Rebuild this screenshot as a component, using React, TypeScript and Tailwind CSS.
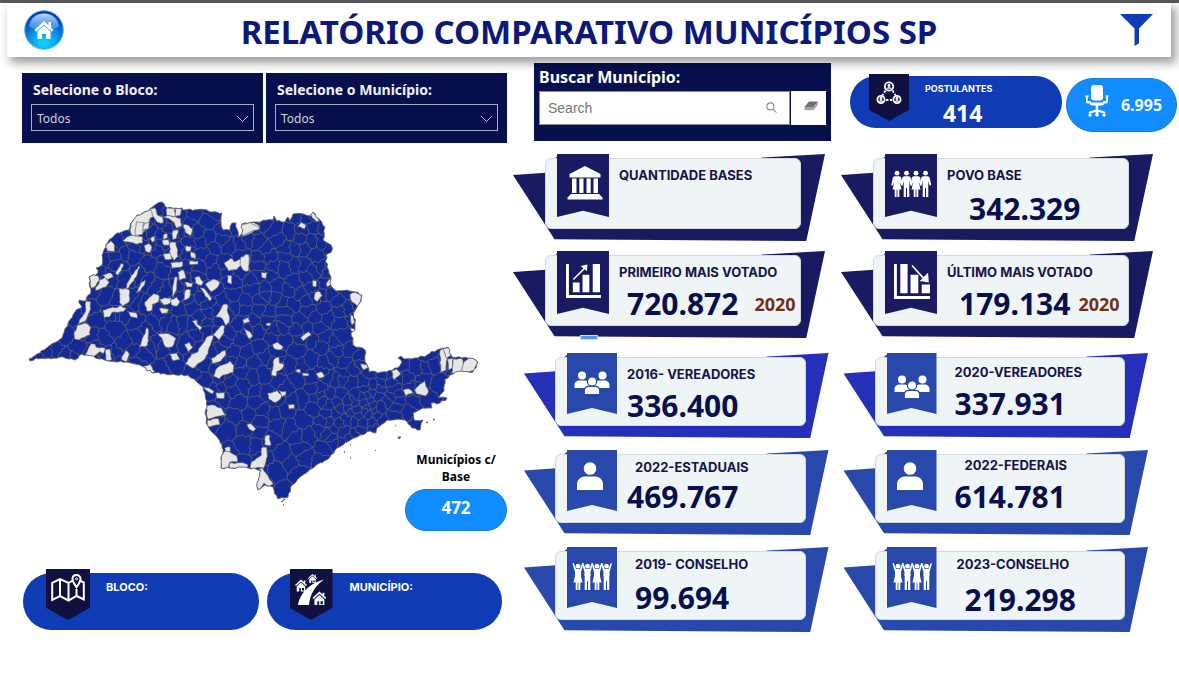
import React from "react";

type Pt = [number, number];

/* ---------- map geometry ---------- */

function random(seed: number) {
  let s = seed;
  return () => {
    s = (s * 1664525 + 1013904223) % 4294967296;
    return s / 4294967296;
  };
}

const parse = (text: string): Pt[] =>
  text.split(" ").map((p) => p.split(",").map(Number) as Pt);

const OUTLINE = parse(
  "29,359 40,353 49,346 62,338 68,323 75,312 82,307 79,300 86,301 91,290 89,277 98,273 96,268 102,265 103,253 108,242 117,233 129,230 132,222 137,215 148,211 155,205 162,202 167,208 182,208 183,210 207,210 210,212 222,213 221,223 223,230 230,230 232,223 236,223 238,237 242,233 242,224 253,222 257,222 273,220 274,216 277,221 285,222 288,217 290,221 293,214 303,214 310,216 313,212 319,219 325,227 323,240 331,245 332,250 326,255 327,267 331,278 331,286 336,291 347,290 355,292 362,295 361,301 358,305 354,312 355,323 355,330 351,333 353,345 365,350 365,362 368,367 369,372 387,372 397,368 402,362 398,358 401,356 404,359 415,358 427,355 437,350 448,347 452,357 462,358 470,358 478,362 473,372 461,371 453,374 445,379 444,391 438,398 447,398 440,403 431,403 432,408 423,408 413,413 414,420 423,420 420,430 412,428 405,420 387,420 377,428 376,433 370,431 357,437 337,448 330,457 313,468 300,477 292,485 288,497 278,499 273,487 265,485 258,490 257,483 261,470 245,467 230,468 221,468 221,458 223,453 222,445 217,437 210,430 206,423 205,413 207,407 203,387 196,381 188,375 152,373 140,365 127,362 108,361 99,359 87,355 82,354 75,360 60,357 48,358 36,358 30,361"
);

function roughen(points: Pt[], step: number, amount: number, seed: number) {
  const rnd = random(seed);
  const out: Pt[] = [];
  points.forEach(([x, y], i) => {
    const [nx, ny] = points[(i + 1) % points.length];
    const n = Math.max(1, Math.round(Math.hypot(nx - x, ny - y) / step));
    for (let k = 0; k < n; k++) {
      const a = k === 0 ? 0 : amount;
      out.push([
        x + ((nx - x) * k) / n + (rnd() - 0.5) * a,
        y + ((ny - y) * k) / n + (rnd() - 0.5) * a,
      ]);
    }
  });
  return "M" + out.map(([x, y]) => `${x.toFixed(1)} ${y.toFixed(1)}`).join("L") + "Z";
}

function inside([px, py]: Pt, poly: Pt[]) {
  let hit = false;
  for (let i = 0, j = poly.length - 1; i < poly.length; j = i++) {
    const [xi, yi] = poly[i];
    const [xj, yj] = poly[j];
    if (yi > py !== yj > py && px < ((xj - xi) * (py - yi)) / (yj - yi) + xi) hit = !hit;
  }
  return hit;
}

function spacing(x: number, y: number) {
  const metro = Math.hypot(x - 358, y - 408);
  if (metro < 16) return 4;
  if (metro < 45) return 7;
  if (x < 330 && y > 405) return 14;
  if (x > 380) return 9;
  if (x < 180) return 7;
  return 9.5;
}

function buildCells() {
  const rnd = random(77);
  const sites: Pt[] = [];
  for (let i = 0; i < 4500; i++) {
    const p: Pt = [29 + rnd() * 450, 202 + rnd() * 298];
    const spread = 0.65 + rnd() * 0.7;
    if (!inside(p, OUTLINE)) continue;
    const r = spacing(p[0], p[1]) * spread;
    const tall = p[0] < 180 && p[1] > 250 ? 0.36 : 1;
    if (sites.every(([x, y]) => Math.hypot(x - p[0], (y - p[1]) * tall) > r)) sites.push(p);
  }
  let path = "";
  sites.forEach(([sx, sy]) => {
    let cell: Pt[] = [
      [sx - 26, sy - 26],
      [sx + 26, sy - 26],
      [sx + 26, sy + 26],
      [sx - 26, sy + 26],
    ];
    sites.forEach(([ox, oy]) => {
      const dx = ox - sx;
      const dy = oy - sy;
      if ((dx === 0 && dy === 0) || Math.hypot(dx, dy) > 52) return;
      const mx = (sx + ox) / 2;
      const my = (sy + oy) / 2;
      const side = ([x, y]: Pt) => (x - mx) * dx + (y - my) * dy;
      const next: Pt[] = [];
      cell.forEach((a, i) => {
        const b = cell[(i + 1) % cell.length];
        const da = side(a);
        const db = side(b);
        if (da <= 0) next.push(a);
        if (da <= 0 !== db <= 0) {
          const t = da / (da - db);
          next.push([a[0] + (b[0] - a[0]) * t, a[1] + (b[1] - a[1]) * t]);
        }
      });
      cell = next;
    });
    cell.forEach((p, i) => {
      const q = cell[(i + 1) % cell.length];
      if (p[0] + p[1] * 0.01 > q[0] + q[1] * 0.01) return;
      const len = Math.hypot(q[0] - p[0], q[1] - p[1]);
      const n = Math.max(1, Math.round(len / 2.5));
      path += `M${p[0].toFixed(1)} ${p[1].toFixed(1)}`;
      for (let k = 1; k < n; k++) {
        const h = (rnd() - 0.5) * 3;
        const x = p[0] + ((q[0] - p[0]) * k) / n - ((q[1] - p[1]) / len) * h;
        const y = p[1] + ((q[1] - p[1]) * k) / n + ((q[0] - p[0]) / len) * h;
        path += `L${x.toFixed(1)} ${y.toFixed(1)}`;
      }
      path += `L${q[0].toFixed(1)} ${q[1].toFixed(1)}`;
    });
  });
  return path;
}

const OUTLINE_PATH = roughen(OUTLINE, 3, 2, 5);
const CELLS_PATH = buildCells();

/* Municipalities without a base; each sheet has its own origin at triple scale. */
const WEST = [
  "330,105 333,85 350,62 385,46 408,45 412,62 392,68 385,95 370,112 350,128 334,118",
  "350,80 372,82 368,118 345,122",
  "374,84 388,82 386,102 368,106",
  "390,40 404,38 412,60 428,66 430,84 412,82 402,68",
  "440,38 465,38 465,65 440,62",
  "465,38 484,40 480,62 465,65",
  "430,66 450,62 482,70 486,92 470,100 462,82 448,72",
  "308,138 330,122 368,125 368,145 345,146",
  "490,88 508,92 518,102 512,123 496,112",
  "256,155 272,138 284,150 284,170 262,168",
  "372,152 388,146 396,158 388,174 376,168",
  "392,128 402,124 404,138 396,142",
  "458,108 475,105 470,130 458,134",
  "426,136 446,134 450,150 430,150",
  "430,120 440,114 442,128 430,134",
  "450,142 468,142 474,184 462,196 450,180",
  "430,178 450,174 456,192 436,194",
  "452,204 486,198 488,214 456,220",
  "498,152 514,156 512,168 498,168",
  "512,170 526,176 526,190 514,188",
  "508,198 534,198 534,208 508,208",
  "208,246 220,238 236,244 238,256 224,276 214,280",
  "238,256 256,246 268,262 258,276 240,282 226,286",
  "248,240 272,234 280,246 262,254",
  "286,236 302,206 310,206 306,220 294,240",
  "314,284 334,242 356,212 360,216 350,244 326,278",
  "348,294 364,262 376,254 374,270 362,286",
  "298,280 328,284 328,320 308,334 298,322",
  "248,346 266,340 288,338 300,330 320,340 310,350 276,352 268,366 252,368",
  "320,348 350,354 352,370 334,366",
  "374,322 400,296 418,302 416,320 398,328 396,346 380,348",
  "418,312 452,308 460,320 434,330",
  "450,314 470,306 480,320 470,334 454,330",
  "418,340 446,342 442,354 426,356",
  "458,292 464,246 472,246 470,284 458,308",
  "474,232 490,224 498,250 478,256",
  "494,262 518,264 516,276 500,276",
  "498,284 512,284 508,308 490,316",
  "524,248 538,244 550,262 544,272 526,264",
  "540,278 552,280 576,312 568,318",
  "556,268 580,252 600,262 592,278 574,290",
  "612,204 632,190 642,200 660,192 676,178 688,180 686,196 688,226 664,212 650,224 626,228",
  "624,240 636,244 634,268 622,262",
  "198,318 212,320 212,342 196,378 176,388 178,376 196,350",
  "162,420 172,390 196,384 212,398 210,420 178,434 164,432",
  "196,478 214,446 226,448 228,456 256,460 250,476 240,470 216,488",
  "256,464 270,462 276,494 260,500",
  "304,492 318,466 328,478 320,500",
  "358,456 380,398 386,402 382,452",
  "414,416 446,416 468,430 456,456 436,456 428,436",
  "448,478 470,474 480,494 460,498",
  "364,514 390,508 404,530 388,542 372,536",
  "494,448 508,442 518,458 504,470",
  "516,378 530,374 532,388 546,398 540,406",
  "496,506 514,478 534,470 548,446 560,426 580,420 572,450 556,490 520,520",
  "578,420 606,390 614,394 612,414 598,434",
  "588,366 608,330 622,328 628,380 618,392 606,370",
  "574,490 616,466 618,478 600,500 576,506",
  "580,544 592,518 630,498 642,512 640,532 610,540 598,552",
  "668,374 686,366 690,380 672,386",
  "672,400 690,410 698,424 688,432",
  "664,88 700,82 718,92 718,100 680,120 668,124",
];
const EAST = [
  "0,90 30,82 50,92 60,100 10,120 4,118",
  "172,94 184,82 198,90 194,102",
  "208,56 218,52 238,76 230,80",
  "2,186 24,178 28,190 26,228 10,226 0,208",
  "64,232 82,232 78,250 66,248",
  "218,256 230,258 228,276 218,274",
  "258,266 268,252 282,264 262,276",
  "226,292 240,290 246,302 232,320 222,312",
  "330,298 346,292 364,298 362,318 352,334 332,314",
  "330,358 340,364 344,382 336,390 332,374",
  "330,400 348,404 340,414",
  "182,428 206,410 214,420 190,438",
  "78,386 92,384 90,392 80,392",
  "98,448 112,442 130,456 124,464 104,462",
  "102,492 116,486 118,504 132,508 126,522 110,530 108,544 94,540",
  "168,524 180,522 182,532 170,532",
  "228,536 244,530 254,544 238,550",
  "188,534 206,536 206,542 188,542",
  "362,506 384,510 384,518 370,524",
  "454,528 470,522 482,536 462,554",
  "600,466 610,460 622,490 618,526 602,532",
  "610,460 628,458 634,480 620,490",
  "622,492 640,490 638,518 626,526",
  "640,492 668,492 672,534 636,536",
  "672,500 690,488 712,498 704,526 664,534",
];
const SOUTH = [
  "40,140 56,144 72,154 68,162 50,152",
  "78,158 104,158 102,176 80,174",
  "46,196 66,194 94,204 108,226 78,230 54,238",
  "52,240 86,236 90,254 52,260",
  "232,160 262,152 276,164 272,176 256,188 236,176",
  "268,152 288,154 288,164 276,170",
  "294,196 314,194 312,206 298,208",
  "170,254 184,252 198,266 190,274 178,268",
  "226,288 240,286 242,318 224,314",
  "214,324 230,322 232,350 222,384 180,384 184,366 214,346",
  "94,346 108,330 140,348 142,366 120,366 116,386 92,386",
  "104,324 120,320 122,334 108,336",
  "118,370 150,368 174,374 172,384 120,386",
  "208,386 218,384 250,432 236,440 222,430 206,450 198,438",
  "640,150 656,146 670,158 648,168",
  "674,150 704,122 716,154 706,168 680,162",
];

function Sheet({ x, y, shapes }: { x: number; y: number; shapes: string[] }) {
  return (
    <g transform={`translate(${x} ${y}) scale(0.3333)`}>
      {shapes.map((s, i) => (
        <path key={s} d={roughen(parse(s), 9, 4, i + 3)} />
      ))}
    </g>
  );
}

function StateMap() {
  return (
    <svg viewBox="22 143 485 426" className="block w-full" role="img" aria-label="Mapa dos municípios">
      <clipPath id="state">
        <path d={OUTLINE_PATH} />
      </clipPath>
      <path d={OUTLINE_PATH} fill="#142a96" />
      <g clipPath="url(#state)">
        <path d={CELLS_PATH} fill="none" stroke="#66676a" strokeWidth="0.8" />
        <g fill="#e6e6e6" stroke="#636467" strokeWidth="2">
          <Sheet x={20} y={195} shapes={WEST} />
          <Sheet x={240} y={195} shapes={EAST} />
          <Sheet x={190} y={340} shapes={SOUTH} />
        </g>
      </g>
      <path d={OUTLINE_PATH} fill="none" stroke="#636467" strokeWidth="0.9" />
      <g fill="#142a96" stroke="#636467" strokeWidth="1">
        <path d="M398 437l3 0-2 2zM395 425l1 1zM426 422l2 1zM433 419l2 1zM350 445l1 0zM344 452l1 0zM375 450l1 1zM350 458l1 0zM281 502l4-3zM283 505l1 0z" />
      </g>
    </svg>
  );
}

/* ---------- icons ---------- */

function HomeOrb() {
  return (
    <svg viewBox="0 0 40 40" className="size-10">
      <defs>
        <radialGradient id="orb" cx="0.5" cy="0.85" r="0.85">
          <stop offset="0" stopColor="#12d8ff" />
          <stop offset="0.4" stopColor="#0a9cf0" />
          <stop offset="0.75" stopColor="#0756c8" />
          <stop offset="1" stopColor="#0a2fa8" />
        </radialGradient>
        <linearGradient id="gloss" x1="0" y1="0" x2="0" y2="1">
          <stop offset="0" stopColor="#dff0ff" stopOpacity="0.85" />
          <stop offset="1" stopColor="#7fc4ff" stopOpacity="0.35" />
        </linearGradient>
      </defs>
      <circle cx="20" cy="20" r="19.3" fill="url(#orb)" stroke="#4bb4e0" strokeWidth="1" />
      <path d="M5 16C6 8 13 3.500 20 3.500S34 8 35 16c-4 3-8 4-15 4S9 19 5 16z" fill="url(#gloss)" />
      <path d="M20 11l-9.500 9 1.700 1.800L20 14.500l7.800 7.300 1.700-1.800-2.500-2.400V12h-2.600v3.200z" fill="#fff" />
      <path d="M13.500 21.500L20 15.500l6.500 6v7.500h-4.300v-5h-4.400v5h-4.300z" fill="#fff" />
    </svg>
  );
}

function Bank() {
  return (
    <svg viewBox="0 0 36 34" className="ml-1 w-9" fill="#fff">
      <path d="M18 0L2.500 8v3.500h31V8zM5 12.500h4.500V27H5zM12.300 12.500h4.200V27h-4.200zM19.500 12.500h4.200V27h-4.200zM26.500 12.500H31V27h-4.500zM4 28h28l3.500 3.500V33.500H.5v-2z" />
    </svg>
  );
}

function BarsUp() {
  return (
    <svg viewBox="0 0 36 36" className="w-[35px]" fill="#fff">
      <path d="M0 1h3v32h33v3H0zM7 20h7v10H7zM17 12h7v18h-7zM27.500 1H35v29h-7.500z" />
      <path d="M7 16.500L18 5.500l-3-2.500 7-1.500-.5 7-2.200-2L8 17.500z" />
    </svg>
  );
}

function BarsDown() {
  return (
    <svg viewBox="0 0 38 38" className="w-[37px]" fill="#fff">
      <path d="M1 1h3v33h34v3H1zM7.500 1H15v30H7.500zM18 12h8v19h-8zM29.500 22H38v9h-8.500z" />
      <path d="M20 2l11.500 12.500 4.500-4.500.8 10-9.500-1.500 3-2.500L19 3z" />
    </svg>
  );
}

function Person({ x, dress, raised }: { x: number; dress: boolean; raised: boolean }) {
  return (
    <g transform={`translate(${x} 0)`}>
      <circle cx="5" cy="3.200" r="2.400" />
      {raised ? (
        <path d="M-.5.500L.8 0 3 6h4l2.200-6 1.300.5L8 9v4H2V9z" />
      ) : (
        <path d="M3 6.200h4c1.500 0 2 .8 2.300 2l1.500 7-1.600.4L7.500 11v4h-5v-4L.8 15.600l-1.600-.4 1.500-7c.3-1.200.8-2 2.300-2z" />
      )}
      {dress ? (
        <path d="M2.500 11h5l2 8.500H7.300V27H5.400v-7.500h-.8V27H2.700v-7.500H.5z" />
      ) : (
        <path d="M2.200 11h5.600v16H5.500v-9h-1v9H2.200z" />
      )}
    </g>
  );
}

function People({ raised = false }: { raised?: boolean }) {
  return (
    <svg viewBox="-1 0 40 28" className="w-10" fill="#fff">
      <Person x={0} dress raised={raised} />
      <Person x={9.5} dress={false} raised={raised} />
      <Person x={19} dress raised={raised} />
      <Person x={28.500} dress={false} raised={raised} />
    </svg>
  );
}

function Group() {
  return (
    <svg viewBox="0 0 36 24" className="w-9" fill="#fff" stroke="#2a49ac">
      <g stroke="none">
        <circle cx="8" cy="4.500" r="4" />
        <circle cx="28.500" cy="4.500" r="4" />
        <path d="M.5 17v-3C.5 11 3 9.500 5.500 9.500h5C13 9.500 15 11 15 13v4zM21 17v-4c0-2 2-3.500 4.500-3.500h5c2.500 0 5 1.500 5 4.500v3z" />
      </g>
      <circle cx="18" cy="10.500" r="4.600" strokeWidth="1.200" />
      <path d="M10.300 23.500V20c0-3 2.300-4.600 5-4.600h5.400c2.700 0 5 1.600 5 4.600v3.500z" strokeWidth="1.200" />
    </svg>
  );
}

function Single() {
  return (
    <svg viewBox="0 0 26 28" className="mr-1 w-[26px]" fill="#fff">
      <circle cx="13" cy="6.500" r="6.300" />
      <path d="M0 28v-6c0-4.500 4-7.500 8-7.500h10c4 0 8 3 8 7.500v6z" />
    </svg>
  );
}

function Network() {
  return (
    <svg viewBox="0 0 26 24" className="w-[26px]" fill="none" stroke="#fff" strokeWidth="1.800">
      <path d="M9.500 9.500L6 15M16.500 9.500L20 15M10 19h6" strokeDasharray="2.500 1.500" />
      {[
        [13, 5.500, 4.200],
        [5, 18.500, 3.600],
        [21, 18.500, 3.600],
      ].map(([x, y, r]) => (
        <g key={x}>
          <circle cx={x} cy={y} r={r} />
          <circle cx={x} cy={y - 1} r="1.400" fill="#fff" stroke="none" />
          <path d={`M${x - 3} ${y + 2.2}q3-3.500 6 0z`} fill="#fff" stroke="none" />
        </g>
      ))}
    </svg>
  );
}

function OfficeChair() {
  return (
    <svg viewBox="0 0 24 32" className="w-6" fill="#fff">
      <rect x="6" y="0" width="12" height="15.500" rx="3" />
      <path d="M.2 10.500h3.600v1.300h-1V16h3c0 1 .6 1.500 1.500 1.500h9.400c.9 0 1.500-.5 1.500-1.500h3v-4.200h-1v-1.300h3.600v1.300H23v5c0 1-.8 1.700-2 1.700h-1.500c-.3 1.300-1.300 2-2.700 2h-3.500v4.200l5.600 1.600c1 .3 1.400.8 1.400 2h-1.800l-5.200-1.300v3.500h-2.600V27l-5.200 1.300H3.700c0-1.200.4-1.700 1.400-2l5.600-1.600v-4.200H7.200c-1.400 0-2.400-.7-2.700-2H3c-1.200 0-2-.7-2-1.700v-5H.2z" />
      <circle cx="5" cy="30" r="1.700" />
      <circle cx="12" cy="30" r="1.700" />
      <circle cx="19" cy="30" r="1.700" />
    </svg>
  );
}

function MapPin() {
  return (
    <svg viewBox="0 0 34 28" className="w-[34px]" fill="none" stroke="#fff" strokeWidth="2">
      <path d="M22 6.500L17.500 9 9 5 1.200 8.800v17L9 22l8.500 4.500 8-4.500 7.300 3.500V8.500L29.500 7M9 5v17M17.500 9v17.500M25.500 15v7" />
      <path d="M25.500 1c-2.400 0-4 1.700-4 3.900 0 2.600 4 8.300 4 8.300s4-5.700 4-8.300c0-2.200-1.600-3.900-4-3.900z" />
      <circle cx="25.500" cy="4.800" r="1" strokeWidth="1" />
    </svg>
  );
}

function House({ x, y, s }: { x: number; y: number; s: number }) {
  return (
    <g transform={`translate(${x} ${y}) scale(${s})`}>
      <path d="M6 0L0 5.600l.9 1L6 2l5.100 4.600.9-1-1.700-1.600V1H8.800v1.500z" />
      <path d="M6 3L1.700 6.900V12h2.500V8.500h1.600V12H7V8.500h2V11h-2v1h3.300V6.900z" />
    </g>
  );
}

function Village() {
  return (
    <svg viewBox="0 0 32 31" className="w-8" fill="#fff">
      <path d="M3 31c2-10 9-21 26-25.500C20 12 15 20 14 31z" />
      <House x={0} y={5.5} s={1} />
      <House x={13} y={0} s={0.75} />
      <House x={17.500} y={17.500} s={1.150} />
    </svg>
  );
}

/* ---------- pieces ---------- */

function Dropdown({ id, label }: { id: string; label: string }) {
  return (
    <div className="flex-1 bg-[#080f4d] px-[9px] pt-[7px] pb-3">
      <label htmlFor={id} className="block pl-[2px] text-[14px] leading-5 font-bold whitespace-nowrap text-[#f0f1f8]">
        {label}
      </label>
      <div className="relative mt-1">
        <select
          id={id}
          className="block h-[27px] w-full appearance-none rounded-none border border-[#a9acc8] bg-transparent pt-[3px] pl-[5px] text-[12px] text-[#cfd1de]"
        >
          <option>Todos</option>
        </select>
        <svg
          viewBox="0 0 14 8"
          className="pointer-events-none absolute top-[11px] right-[5px] w-[13px]"
          fill="none"
          stroke="#cfd1de"
        >
          <path d="M1 1l6 6 6-6" />
        </svg>
      </div>
    </div>
  );
}

function Badge({ className, children }: { className: string; children: React.ReactNode }) {
  return (
    <span
      className={`absolute flex items-start justify-center bg-[#101140] [clip-path:polygon(0_0,100%_0,100%_76%,50%_100%,0_76%)] ${className}`}
    >
      {children}
    </span>
  );
}

type CardProps = {
  title: string;
  value?: string;
  year?: string;
  icon: React.ReactNode;
  iconTop: string;
  tone: string;
  ribbon: string;
  text: string;
  number: string;
};

function BannerCard({ big, card }: { big: boolean; card: CardProps }) {
  return (
    <article className={`relative ${big ? "h-[87px] pt-1 pr-6 pl-8" : "h-[85px] pt-1 pr-[23px] pl-[31px]"}`}>
      <div
        className={`absolute inset-0 [clip-path:polygon(0_24%,10.500%_21.500%,14%_50%,40%_50%,80%_4%,100%_0,94%_100%,13.300%_98%)] ${card.tone}`}
      />
      <div
        className={`absolute top-0 h-3 w-4 [clip-path:polygon(0_50%,45%_0,100%_0,100%_50%)] ${
          big ? "left-[40px]" : "left-[38px]"
        } ${card.tone}`}
      />
      <div
        className={`relative rounded-md border border-[#d3d8dd] bg-[#eff4f6] ${
          big ? "h-[71px] pl-[73px]" : "h-[69px] pl-[71px]"
        }`}
      >
        <div
          className={`absolute -top-[5px] left-[11px] flex items-start justify-center [clip-path:polygon(0_0,100%_0,100%_100%,50%_90%,0_100%)] ${
            big ? "h-[63px] w-[52px]" : "h-[61px] w-[50px]"
          } ${card.ribbon} ${card.iconTop}`}
        >
          {card.icon}
        </div>
        <h2 className={`font-[Inter] text-[13px] leading-4 font-bold whitespace-nowrap text-[#15154a] ${card.text}`}>
          {card.title}
        </h2>
        {card.value && (
          <div className={`flex items-center whitespace-nowrap ${card.number}`}>
            <strong className="text-[30px] leading-8 text-[#080f4d]">{card.value}</strong>
            {card.year && <span className="text-[18px] leading-5 font-bold text-[#752f16]">{card.year}</span>}
          </div>
        )}
      </div>
    </article>
  );
}

const NAVY = { tone: "bg-[#191b62]", ribbon: "bg-[#191b62]" };
const ROYAL = { tone: "bg-[#252fb8]", ribbon: "bg-[#2849ab]" };
const BLUE = { tone: "bg-[#2849ab]", ribbon: "bg-[#2849ab]" };

const TOP_CARDS: CardProps[] = [
  { ...NAVY, title: "QUANTIDADE BASES", icon: <Bank />, iconTop: "pt-3", text: "pt-2", number: "" },
  { ...NAVY, title: "POVO BASE", value: "342.329", icon: <People />, iconTop: "pt-4", text: "pt-2", number: "mt-[10px] pl-[22px]" },
  { ...NAVY, title: "PRIMEIRO MAIS VOTADO", value: "720.872", year: "2020", icon: <BarsUp />, iconTop: "pt-3", text: "pt-2", number: "mt-2 gap-4 pl-2" },
  { ...NAVY, title: "ÚLTIMO MAIS VOTADO", value: "179.134", year: "2020", icon: <BarsDown />, iconTop: "pt-3", text: "pt-2", number: "mt-2 gap-2 pl-3" },
];

const LOWER_CARDS: CardProps[] = [
  { ...ROYAL, title: "2016- VEREADORES", value: "336.400", icon: <Group />, iconTop: "pt-[18px]", text: "pt-2", number: "mt-2" },
  { ...ROYAL, title: "2020-VEREADORES", value: "337.931", icon: <Group />, iconTop: "pt-[22px]", text: "pt-[6px] pl-2", number: "mt-2 pl-2" },
  { ...BLUE, title: "2022-ESTADUAIS", value: "469.767", icon: <Single />, iconTop: "pt-3", text: "pt-1 pl-2", number: "mt-[6px]" },
  { ...BLUE, title: "2022-FEDERAIS", value: "614.781", icon: <Single />, iconTop: "pt-3", text: "pt-[2px] pl-[18px]", number: "mt-2 pl-2" },
  { ...BLUE, title: "2019- CONSELHO", value: "99.694", icon: <People raised />, iconTop: "pt-4", text: "pt-1 pl-2", number: "mt-[10px] pl-2" },
  { ...BLUE, title: "2023-CONSELHO", value: "219.298", icon: <People raised />, iconTop: "pt-4", text: "pt-1 pl-[10px]", number: "mt-3 pl-[18px]" },
];

export default function App() {
  return (
    <div className="min-h-screen bg-white font-['Noto_Sans','Open_Sans',sans-serif]">
      <div className="h-[3px] bg-[#595959]" />
      <header className="relative mr-2 ml-[7px] flex h-[54px] items-center justify-between bg-white pr-[18px] pl-[17px] shadow-[4px_5px_9px_1px_rgba(0,0,0,0.38)]">
        <a href="#inicio" aria-label="Início">
          <HomeOrb />
        </a>
        <h1 className="pt-1 pr-[6px] text-[33px] leading-10 font-bold whitespace-nowrap text-[#0c1979]">
          RELATÓRIO COMPARATIVO MUNICÍPIOS SP
        </h1>
        <button type="button" aria-label="Filtros">
          <svg viewBox="0 0 33 32" className="w-[33px]" fill="#0f3cb4">
            <path d="M0 0h33L19 14.500v14.800L14.500 32V14.500z" />
          </svg>
        </button>
      </header>

      <main className="grid grid-cols-[485fr_664fr] gap-[6px] pt-[6px] pr-[2px] pl-[22px]">
        <section className="min-w-0 pt-[10px]">
          <div className="flex h-[70px] gap-[3px]">
            <Dropdown id="bloco" label="Selecione o Bloco:" />
            <Dropdown id="municipio" label="Selecione o Município:" />
          </div>
          <div className="relative">
            <StateMap />
            <div className="absolute right-0 bottom-[38px] w-[102px] text-center">
              <p className="px-2 text-[12px] leading-[17px] font-bold text-black">Municípios c/ Base</p>
              <p className="mt-1 h-[42px] rounded-full border border-[#1a78d8] bg-[#118dff] text-[17px] leading-9 font-bold text-white">
                472
              </p>
            </div>
          </div>
          <div className="flex gap-2 pt-1 pr-[5px] pl-[1px]">
            <div className="relative h-[57px] flex-1 rounded-full bg-[#0f3cb4] pt-[6px] pl-[83px]">
              <Badge className="-top-1 left-[23px] h-[51px] w-[44px] pt-[5px]">
                <MapPin />
              </Badge>
              <p className="font-[Inter] text-[11px] leading-4 font-bold text-white">BLOCO:</p>
            </div>
            <div className="relative h-[57px] flex-1 rounded-full bg-[#0f3cb4] pt-[6px] pl-[83px]">
              <Badge className="-top-1 left-[23px] h-[51px] w-[43px] pt-[5px]">
                <Village />
              </Badge>
              <p className="font-[Inter] text-[11px] leading-4 font-bold text-white">MUNICÍPIO:</p>
            </div>
          </div>
        </section>

        <section className="min-w-0">
          <div className="grid grid-cols-[297fr_231fr_115fr] pl-[21px]">
            <form className="h-[78px] min-w-0 bg-[#080f4d] pt-1 pr-[5px] pl-[5px]" role="search">
              <label htmlFor="busca" className="block text-[16px] leading-5 font-bold text-white">
                Buscar Município:
              </label>
              <div className="mt-1 flex h-[34px] gap-[1px]">
                <div className="relative min-w-0 flex-1">
                  <input
                    id="busca"
                    type="search"
                    placeholder="Search"
                    className="h-full w-full border border-[#8c8c8c] bg-white pl-2 font-['Liberation_Sans',sans-serif] text-[14px] text-[#444] placeholder:text-[#757575]"
                  />
                  <svg
                    viewBox="0 0 12 12"
                    className="pointer-events-none absolute top-[11px] right-[13px] w-[11px]"
                    fill="none"
                    stroke="#8a8a8a"
                    strokeWidth="1.200"
                  >
                    <circle cx="4.800" cy="4.800" r="3.800" />
                    <path d="M7.500 7.500l4 4" />
                  </svg>
                </div>
                <button type="button" aria-label="Limpar" className="flex w-[35px] items-center justify-center bg-white">
                  <svg viewBox="0 0 16 10" className="mb-1 ml-1 w-4">
                    <path d="M6 .5h9L10.500 6H1.500z" fill="#6e6e6e" />
                    <path d="M1.500 6h9v3.200h-9zM10.500 6L15 .5v3L10.500 9.200z" fill="#a5a5a5" />
                  </svg>
                </button>
              </div>
            </form>
            <div className="relative mt-[13px] ml-[19px] h-[52px] min-w-0 rounded-full bg-[#0f3cb4] pt-[5px] pl-[75px]">
              <Badge className="-top-[2px] left-[19px] h-[47px] w-10 pt-[7px]">
                <Network />
              </Badge>
              <div className="flex w-fit flex-col items-center text-white">
                <span className="font-[Inter] text-[9px] leading-4 font-bold">POSTULANTES</span>
                <strong className="pl-2 text-[23px] leading-8">414</strong>
              </div>
            </div>
            <div className="mt-[15px] ml-1 flex h-[54px] min-w-0 items-center justify-center gap-3 rounded-full border border-[#1a78d8] bg-[#118dff] pl-1">
              <div className="pb-2">
                <OfficeChair />
              </div>
              <strong className="text-[16px] leading-6 text-[#f2f8ff]">6.995</strong>
            </div>
          </div>

          <div className="relative mt-[13px] grid grid-cols-2 gap-x-4 gap-y-[10px] pr-6">
            {TOP_CARDS.map((card) => (
              <BannerCard key={card.title} big card={card} />
            ))}
            <span className="absolute -bottom-[2px] left-[67px] h-[5px] w-[18px] border border-[#c9dff2] bg-[#4f9be0]" />
          </div>
          <div className="mt-[15px] grid grid-cols-2 gap-x-[15px] gap-y-3 pr-[29px] pl-[11px]">
            {LOWER_CARDS.map((card) => (
              <BannerCard key={card.title} big={false} card={card} />
            ))}
          </div>
        </section>
      </main>
    </div>
  );
}
